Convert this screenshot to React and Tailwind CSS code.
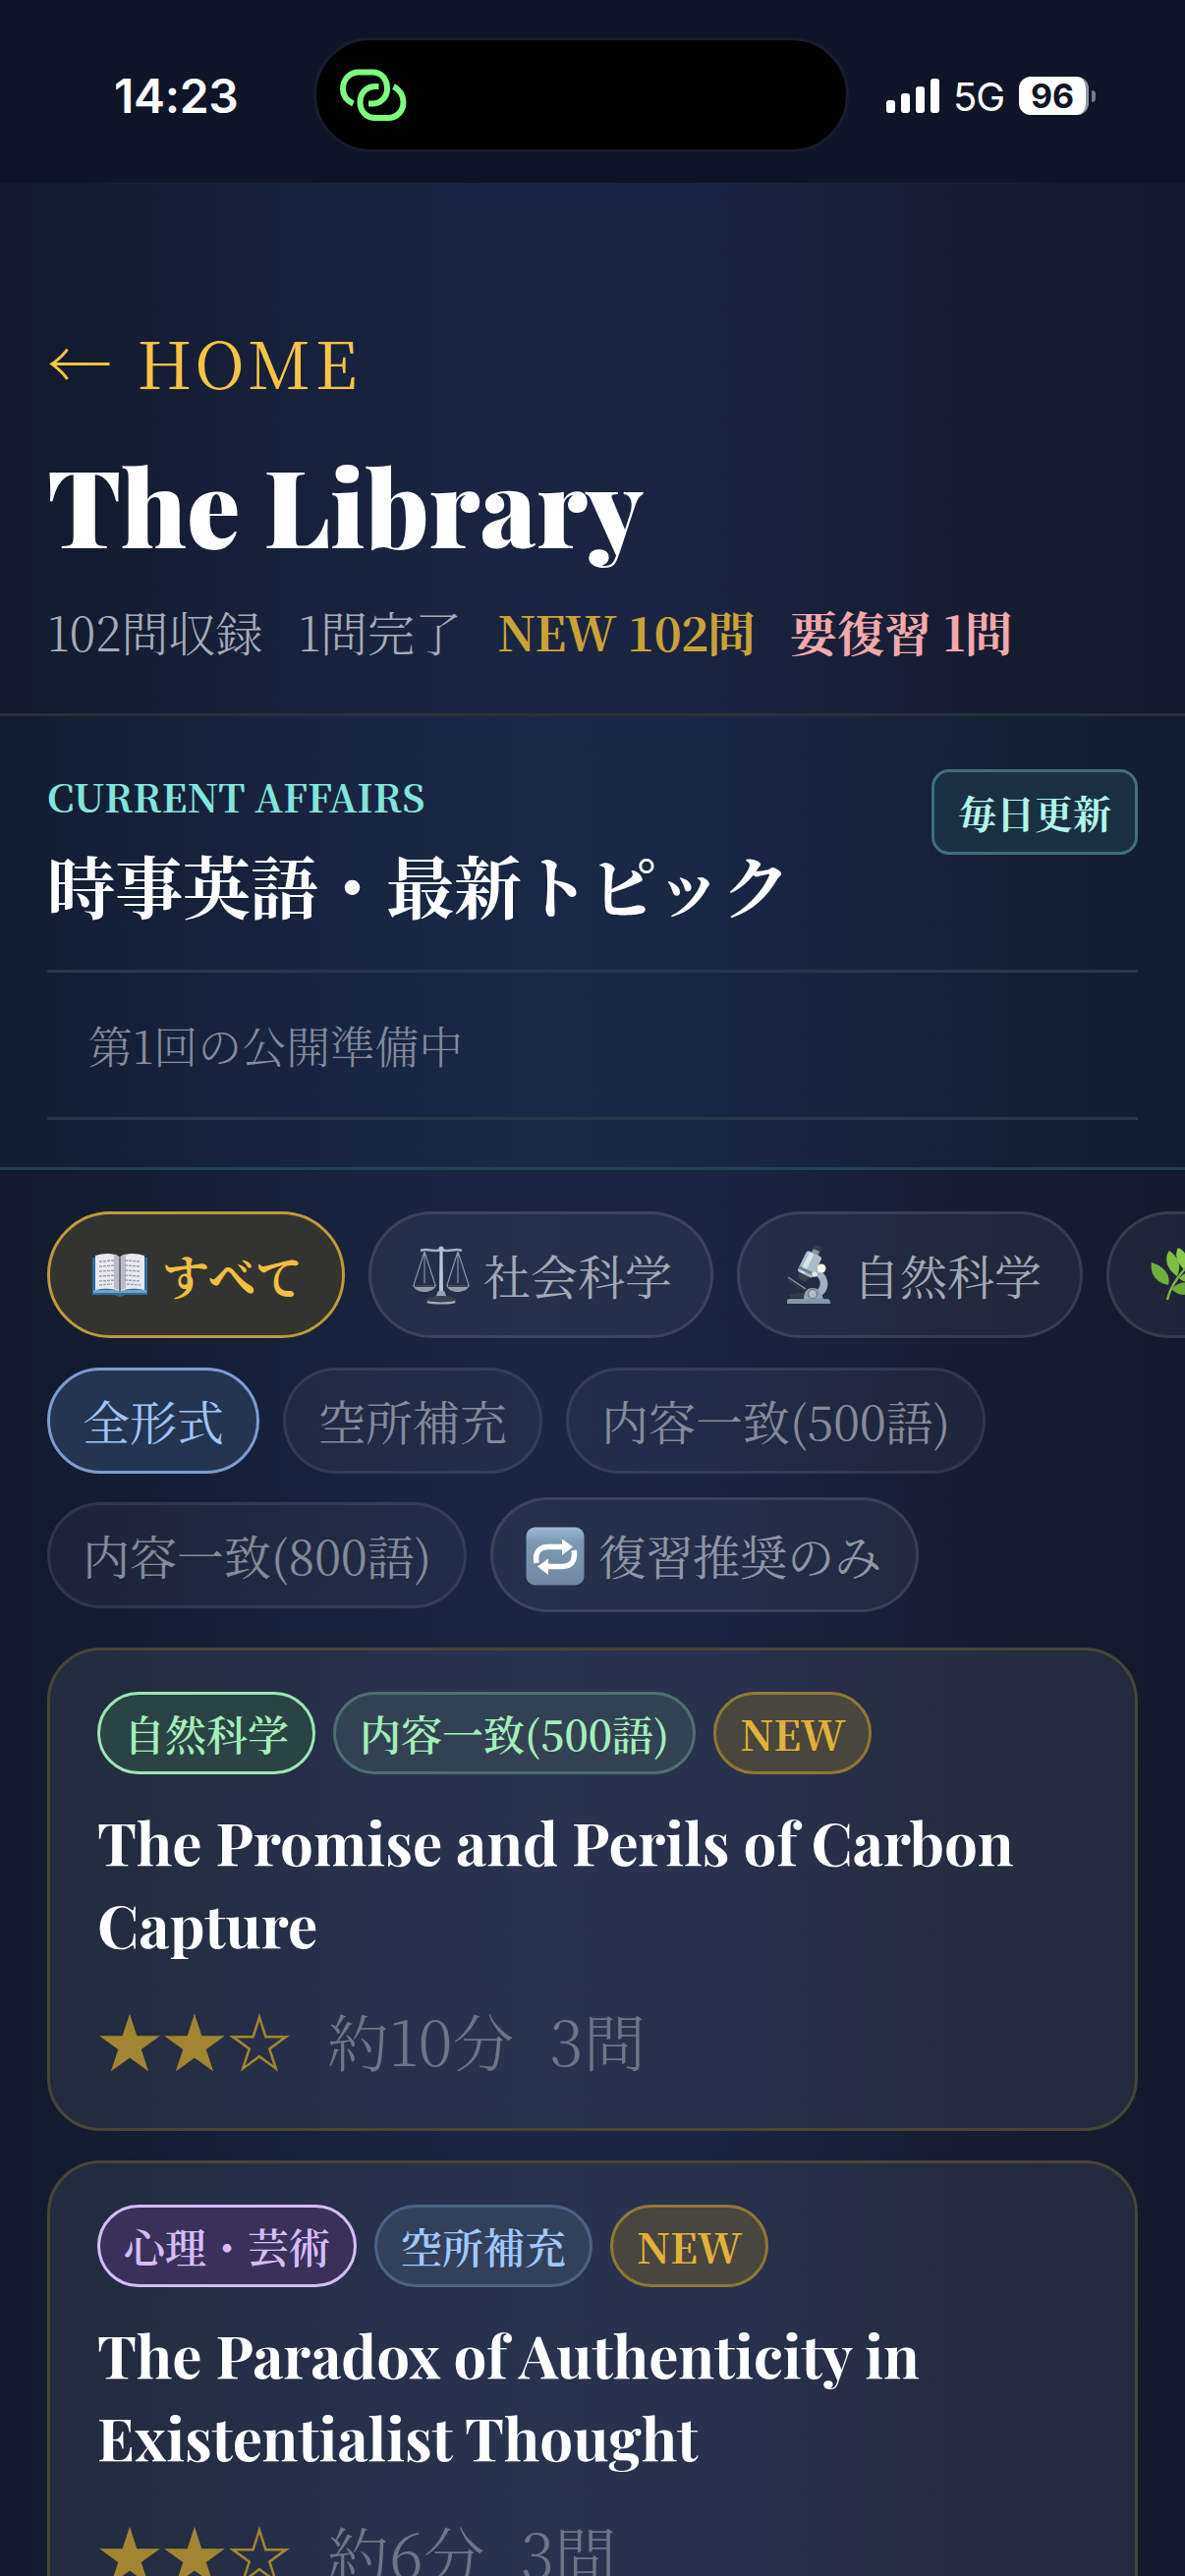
const mincho = "font-['Noto_Serif_CJK_JP','Noto_Serif_JP','Liberation_Serif',serif]";
const playfair = "font-['Playfair_Display','Liberation_Serif',serif]";

function LinkIcon() {
  return (
    <svg viewBox="0 0 68 54" className="h-[54px] w-[68px]" fill="none" stroke="#7dfc7d" strokeWidth="6">
      <path d="M13.5 35.500 C7 32.500 3 27 3 20.500 C3 10.500 10 3.500 19 3.500 H33 C42.500 3.500 48 10.500 48 20.500 C48 29.500 41 35.500 33 35.500 H29" />
      <path d="M39.500 18 H36 C27 18 20.500 24.500 20.500 34 C20.500 43.500 27 50 36 50 H49 C58 50 64.500 43 64.500 34 C64.500 27 60.500 21 54.500 18" />
    </svg>
  );
}

function BookIcon() {
  return (
    <svg viewBox="0 0 56 46" className="h-[46px] w-[56px]">
      <path d="M0 5H56V43H34L28 45L22 43H0Z" fill="#2f6f9c" />
      <path d="M1 38H55V41H1Z" fill="#68a5cb" />
      <path d="M3 3C12 0 23 0 28 5C33 0 44 0 53 3V38C44 36 33 36 28 40C23 36 12 36 3 38Z" fill="#e7e9ef" />
      <path d="M28 5C25 2 24 2 22 1.500V36.500C25 37 27 39 28 40C29 39 31 37 34 36.500V1.500C31 2 29 3 28 5Z" fill="#b9bcc6" />
      <path d="M28 5V40" stroke="#55565f" strokeWidth="1.500" />
      <g stroke="#9a9ca6" strokeWidth="1.300" strokeDasharray="3 1">
        <path d="M7 9L22 8M7 14L23 13M7 19L23 18M7 24L23 23M7 29L23 28M7 33L20 32" />
        <path d="M33 8L49 9M33 13L49 14M33 18L49 19M33 23L49 24M33 28L49 29M35 32L49 33" />
      </g>
    </svg>
  );
}

function ScalesIcon() {
  return (
    <svg viewBox="0 0 60 60" className="h-[60px] w-[60px]" fill="none">
      <g stroke="#8b9bb0" strokeWidth="1.100">
        <path d="M13 6L2 40M13 6L24 40M13 6V38M47 6L36 40M47 6L58 40M47 6V38" />
      </g>
      <path d="M9 5C16 2 22 7 30 4C38 7 44 2 51 5" stroke="#a3b1c2" strokeWidth="2.500" />
      <path d="M28.500 3H31.500L32 49H28Z" fill="#b9c6d4" />
      <circle cx="30" cy="3" r="2.500" fill="#b4c0ce" />
      <path d="M1 40H25C23 45 18 47 13 47C8 47 3 45 1 40ZM35 40H59C57 45 52 47 47 47C42 47 37 45 35 40Z" fill="#8f9baa" />
      <path d="M3 41H23M37 41H57" stroke="#40444a" strokeWidth="1.800" />
      <path d="M27 46H33L36 53H24Z" fill="#98a5b3" />
      <path d="M15 55C17 52 24 51 30 51C36 51 43 52 45 55V59H15Z" fill="#39424c" />
      <path d="M16 57C22 59 38 59 44 57" stroke="#a2afbd" strokeWidth="2" />
    </svg>
  );
}

function MicroscopeIcon() {
  return (
    <svg viewBox="0 0 46 60" className="h-[60px] w-[46px]">
      <path d="M30 23C43 27 47 43 36 51L30 47C37 41 36 33 28 29Z" fill="#9fb0c0" />
      <g transform="rotate(26 24 20)">
        <rect x="19" y="-2" width="9" height="11" rx="1.500" fill="#343a42" />
        <rect x="20" y="3" width="7" height="6" fill="#8793a0" />
        <rect x="15" y="7" width="17" height="24" rx="3" fill="#a9bcca" />
        <rect x="18" y="8" width="5" height="22" fill="#d6e1ea" />
        <rect x="15" y="25" width="17" height="3" fill="#72818f" />
        <path d="M17 31H30L27 37H20Z" fill="#3b4149" />
      </g>
      <circle cx="36" cy="23" r="4.500" fill="#f3f3ea" />
      <circle cx="29" cy="29" r="2.800" fill="#e4e5dc" />
      <path d="M3 32L21 44L18 47L2 36Z" fill="#2e343b" />
      <path d="M2 32L20 44" stroke="#8a98a6" strokeWidth="1.500" />
      <path d="M3 50L20 47V53H5Z" fill="#343b43" />
      <path d="M18 55C18 46 22 43 27 43C32 43 36 46 38 55Z" fill="#93a4b3" />
      <circle cx="27" cy="49" r="4.500" fill="#aebdca" stroke="#5f6e7c" strokeWidth="1.200" />
      <path d="M1 56C1 54 3 54 5 54H41C44 54 45 55 45 59H1Z" fill="#8297a8" />
    </svg>
  );
}

function HerbIcon() {
  return (
    <svg viewBox="0 0 56 56" className="h-[56px] w-[56px] shrink-0">
      <path d="M17 53C20 38 30 25 46 10" stroke="#7cb342" strokeWidth="2.500" fill="none" />
      <path d="M18 38C5 36 -1 26 1 15C13 19 21 27 18 38Z" fill="#6fb03a" />
      <path d="M27 29C15 21 14 10 19 3C28 9 32 18 27 29Z" fill="#7cbf42" />
      <path d="M34 22C25 14 25 5 28 0C37 4 39 12 34 22Z" fill="#8aca4e" />
      <path d="M21 42C31 32 42 35 47 41C40 50 29 50 21 42Z" fill="#6aa936" />
      <path d="M29 31C38 21 48 24 53 28C47 36 37 38 29 31Z" fill="#79b93f" />
    </svg>
  );
}

function RepeatIcon() {
  return (
    <svg viewBox="0 0 60 60" className="h-[60px] w-[60px]">
      <defs>
        <linearGradient id="repeatFill" x1="0" y1="0" x2="0" y2="1">
          <stop offset="0" stopColor="#9db9d2" />
          <stop offset="0.250" stopColor="#7d99b4" />
          <stop offset="1" stopColor="#6f88a4" />
        </linearGradient>
      </defs>
      <rect x="0.500" y="0.500" width="59" height="59" rx="9" fill="url(#repeatFill)" />
      <g fill="none" stroke="#fff" strokeWidth="5.500">
        <path d="M11 37C9 26 14 20.500 23 20.500H38" />
        <path d="M49 24C51 35 46 40.500 37 40.500H22" />
      </g>
      <path d="M37 12.500L48 20.500L37 29ZM23 32.500L12 40.500L23 49Z" fill="#fff" />
    </svg>
  );
}

function StatusBar() {
  return (
    <div className="flex h-[186px] bg-[#0f1526] font-[Inter,sans-serif]">
      <div className="mt-[68px] ml-[116px] w-[203px] text-[48px] leading-[60px] font-semibold tracking-[-0.3px]">14:23</div>
      <div className="mt-[38px] flex h-[117px] w-[545px] items-center rounded-full border-[3px] border-[#171d2c] bg-black pl-[24px]">
        <LinkIcon />
      </div>
      <div className="mt-[80px] ml-[38px] flex h-[35px] items-end gap-[6px]">
        <i className="h-[13px] w-[9px] rounded-[3px] bg-white" />
        <i className="h-[20px] w-[9px] rounded-[3px] bg-white" />
        <i className="h-[27px] w-[9px] rounded-[3px] bg-white" />
        <i className="h-[35px] w-[9px] rounded-[3px] bg-white" />
      </div>
      <div className="mt-[69px] ml-[14px] w-[52px] text-[40px] leading-[60px] tracking-[-1px]">5G</div>
      <div className="mt-[78px] ml-[15px] flex h-[39px] w-[71px] items-center justify-center rounded-[12px] border-r-[3px] border-[#9296a2] bg-white text-[34px] leading-none font-bold text-[#0f1526]">96</div>
      <i className="mt-[92px] ml-[3px] h-[12px] w-[4px] rounded-r-full bg-[#777b88]" />
    </div>
  );
}

function Header() {
  return (
    <header className="h-[543px] border-b-[3px] border-[#2b3038] px-[48px] pt-[134px]">
      <div className="h-[96px] text-[66px] leading-[96px] tracking-[4.2px] text-[#f6c445]">← HOME</div>
      <h1 className={`mt-[37px] h-[120px] text-[108px] leading-[120px] font-black whitespace-nowrap ${playfair}`}>The Library</h1>
      <div className="mt-[34px] flex h-[72px] gap-[36px] text-[48px] leading-[72px] font-light whitespace-nowrap text-[#a7abb6]">
        <span>102問収録</span>
        <span>1問完了</span>
        <span className="font-bold tracking-[-0.7px] text-[#c9a335]">NEW 102問</span>
        <span className="font-bold text-[#f4a8ab]">要復習 1問</span>
      </div>
    </header>
  );
}

function CurrentAffairs() {
  return (
    <section className="h-[462px] border-b-[3px] border-[#25404f] bg-sky-400/[0.02] px-[48px] pt-[51px]">
      <div className="flex justify-between">
        <div>
          <div className="h-[60px] text-[39px] leading-[60px] font-bold text-[#81e6d9]">CURRENT AFFAIRS</div>
          <h2 className="mt-[10px] h-[100px] text-[69px] leading-[101px] font-bold whitespace-nowrap">時事英語・最新トピック</h2>
        </div>
        <div className="mt-[3px] flex h-[87px] w-[210px] items-center justify-center rounded-[18px] border-[3px] border-[#41707a] bg-[#1a3040] text-[39px] font-bold text-[#b2f5ea]">毎日更新</div>
      </div>
      <div className="mt-[37px] h-[153px] border-y-[3px] border-[#293549] pt-[40px] pl-[42px] text-[45px] leading-[67px] font-light text-[#858b9a]">第1回の公開準備中</div>
    </section>
  );
}

function SubjectChip({ icon, label, width, active }) {
  return (
    <div className={`flex h-[129px] shrink-0 items-center rounded-full border-[3px] pl-[42px] text-[48px] leading-none whitespace-nowrap ${width} ${active ? "border-[#bd9b38] bg-[#33342f] font-bold text-[#efc040]" : "border-white/10 bg-white/5 text-[#a4a9b4]"}`}>
      {icon}
      {label && <span className={active ? "ml-[15px]" : "ml-[13px]"}>{label}</span>}
    </div>
  );
}

function FormatChip({ label, active }) {
  return (
    <div className={`flex h-[108px] items-center rounded-full border-[3px] px-[33px] text-[48px] leading-none whitespace-nowrap ${active ? "border-[#7d9bcf] bg-[#25344f] text-[#9fc5fb]" : "border-white/[0.08] bg-white/[0.04] text-[#858b99]"}`}>{label}</div>
  );
}

function Filters() {
  return (
    <div>
      <div className="flex gap-[24px] overflow-hidden pt-[42px] pl-[48px]">
        <SubjectChip active icon={<span className="ml-px flex"><BookIcon /></span>} label="すべて" width="w-[303px]" />
        <SubjectChip icon={<span className="-ml-[1px] flex"><ScalesIcon /></span>} label="社会科学" width="w-[351px]" />
        <SubjectChip icon={<span className="mr-[9px] ml-[5px] flex"><MicroscopeIcon /></span>} label="自然科学" width="w-[352px]" />
        <SubjectChip icon={<HerbIcon />} width="w-[260px]" />
      </div>
      <div className="flex gap-[24px] pt-[30px] pl-[48px]">
        <FormatChip active label="全形式" />
        <FormatChip label="空所補充" />
        <FormatChip label="内容一致(500語)" />
      </div>
      <div className="flex items-center gap-[24px] pt-[24px] pl-[48px]">
        <FormatChip label="内容一致(800語)" />
        <div className="flex h-[117px] w-[436px] items-center rounded-full border-[3px] border-white/10 bg-white/5 pl-[33px] text-[48px] leading-none whitespace-nowrap text-[#9096a4]">
          <span className="mt-[3px] flex"><RepeatIcon /></span>
          <span className="ml-[14px]">復習推奨のみ</span>
        </div>
      </div>
    </div>
  );
}

function Badge({ children, tone }) {
  return (
    <span className={`flex h-[84px] items-center rounded-full border-[3px] px-[24px] text-[42px] leading-none whitespace-nowrap ${tone}`}>{children}</span>
  );
}

const toneNew = "border-[#8f7836] bg-[#48463d] font-bold text-[#e0b23c]";

function Card({ subject, subjectTone, format, formatTone, title, minutes }) {
  return (
    <article className="h-[492px] rounded-[54px] border-[3px] border-[#484536] bg-white/[0.065] px-[48px] pt-[42px]">
      <div className="flex gap-[18px]">
        <Badge tone={subjectTone}>{subject}</Badge>
        <Badge tone={formatTone}>{format}</Badge>
        <Badge tone={toneNew}>NEW</Badge>
      </div>
      <h3 className={`mt-[26px] text-[60px] leading-[84px] font-bold whitespace-nowrap ${playfair}`}>
        {title[0]}
        <br />
        {title[1]}
      </h3>
      <div className="mt-[31px] flex h-[90px] text-[63px] leading-[90px] font-light whitespace-nowrap text-[#6e7585]">
        <span className="w-[234px] text-[66px] text-[#a18532]">★★☆</span>
        <span>約{minutes}分</span>
        <span className="ml-[36px]">3問</span>
      </div>
    </article>
  );
}

export default function App() {
  return (
    <div className={`h-[2622px] w-[1206px] overflow-hidden bg-[linear-gradient(90deg,#131a2d_0%,#18213b_25%,#1b2542_45%,#1a2340_60%,#171e34_78%,#151c2f_90%,#131a2c_100%)] text-white ${mincho}`}>
      <StatusBar />
      <Header />
      <CurrentAffairs />
      <Filters />
      <main className="flex flex-col gap-[30px] px-[48px] pt-[36px]">
        <Card
          subject="自然科学"
          subjectTone="border-[#9ae6b4] bg-[#2a4344] text-[#a3efbb] font-semibold"
          format="内容一致(500語)"
          formatTone="border-[#4e6f6e] bg-[#334252] text-[#a3efbb] font-semibold"
          title={["The Promise and Perils of Carbon", "Capture"]}
          minutes="10"
        />
        <Card
          subject="心理・芸術"
          subjectTone="border-[#d6bcfa] bg-[#39315a] text-[#d6bcfa] font-semibold"
          format="空所補充"
          formatTone="border-[#4d6285] bg-[#334059] text-[#a0c8ff] font-semibold"
          title={["The Paradox of Authenticity in", "Existentialist Thought"]}
          minutes="6"
        />
      </main>
    </div>
  );
}
